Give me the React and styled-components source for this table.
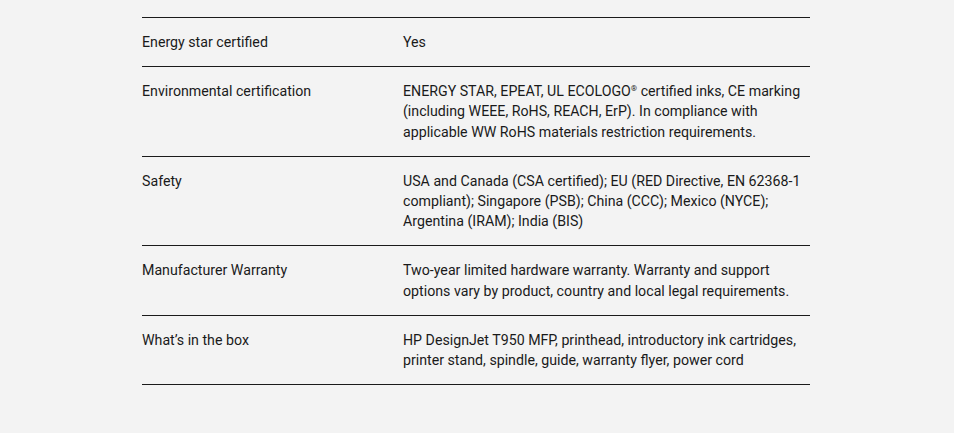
import React from 'react';
import styled, { createGlobalStyle } from 'styled-components';

const specs = [
  { label: 'Energy star certified', lines: ['Yes'] },
  {
    label: 'Environmental certification',
    lines: [
      ['ENERGY STAR, EPEAT, UL ECOLOGO', 'reg', ' certified inks, CE marking'],
      '(including WEEE, RoHS, REACH, ErP). In compliance with',
      'applicable WW RoHS materials restriction requirements.',
    ],
  },
  {
    label: 'Safety',
    lines: [
      'USA and Canada (CSA certified); EU (RED Directive, EN 62368-1',
      'compliant); Singapore (PSB); China (CCC); Mexico (NYCE);',
      'Argentina (IRAM); India (BIS)',
    ],
  },
  {
    label: 'Manufacturer Warranty',
    lines: [
      'Two-year limited hardware warranty. Warranty and support',
      'options vary by product, country and local legal requirements.',
    ],
  },
  {
    label: 'What’s in the box',
    lines: [
      'HP DesignJet T950 MFP, printhead, introductory ink cartridges,',
      'printer stand, spindle, guide, warranty flyer, power cord',
    ],
  },
];

const GlobalStyle = createGlobalStyle`
  html, body {
    margin: 0;
    padding: 0;
    background: #f3f3f3;
  }
  body {
    font-family: Roboto, 'Liberation Sans', sans-serif;
    color: #1a1a1a;
  }
`;

const Page = styled.div`
  min-height: 433px;
  padding: 17px 0 0 142px;
  background: #f3f3f3;
`;

const SpecTable = styled.div`
  width: 668px;
  border-top: 1px solid #1a1a1a;
`;

const SpecRow = styled.div`
  display: grid;
  grid-template-columns: 261px 1fr;
  padding: 14px 0;
  border-bottom: 1px solid #1a1a1a;
  font-size: 14.2px;
  line-height: 20.2px;
`;

const Label = styled.div`
  padding-right: 16px;
`;

const Value = styled.div``;

const Line = styled.div`
  white-space: nowrap;
`;

const Reg = styled.span`
  font-size: 8px;
  vertical-align: 5px;
  line-height: 0;
`;

function renderLine(line) {
  if (typeof line === 'string') return line;
  return line.map((part, i) =>
    part === 'reg' ? <Reg key={i}>®</Reg> : <React.Fragment key={i}>{part}</React.Fragment>
  );
}

export default function App() {
  return (
    <Page>
      <GlobalStyle />
      <SpecTable>
        {specs.map(spec => (
          <SpecRow key={spec.label}>
            <Label>{spec.label}</Label>
            <Value>
              {spec.lines.map((line, i) => (
                <Line key={i}>{renderLine(line)}</Line>
              ))}
            </Value>
          </SpecRow>
        ))}
      </SpecTable>
    </Page>
  );
}
